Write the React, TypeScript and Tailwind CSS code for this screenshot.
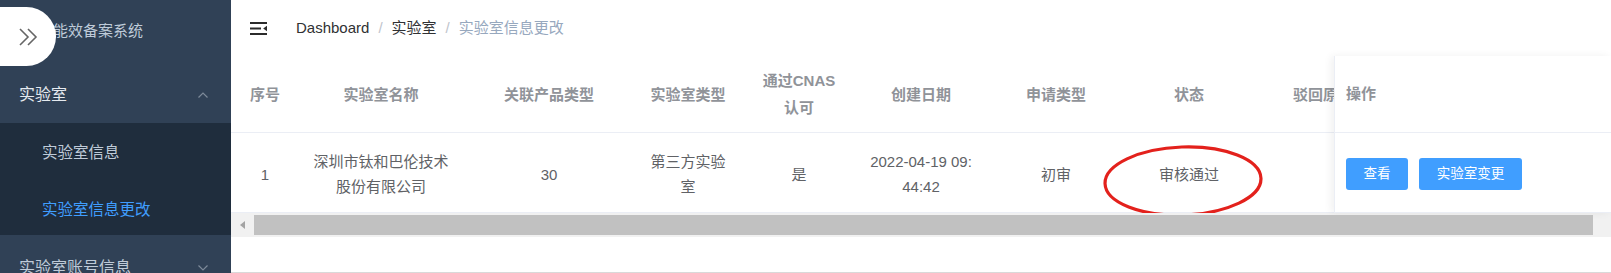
import React from "react"

const headCols = [
  { title: "序号", w: "w-[68px]" },
  { title: "实验室名称", w: "w-[164px]" },
  { title: "关联产品类型", w: "w-[172px]" },
  { title: "实验室类型", w: "w-[106px]" },
  { title: ["通过CNAS", "认可"], w: "w-[116px]" },
  { title: "创建日期", w: "w-[128px]" },
  { title: "申请类型", w: "w-[142px]" },
  { title: "状态", w: "w-[124px]" },
  { title: "驳回原因", w: "w-[144px]" },
  { title: "备注", w: "w-[120px]" },
]

const row: (string | string[])[] = [
  "1",
  ["深圳市钛和巴伦技术", "股份有限公司"],
  "30",
  ["第三方实验", "室"],
  "是",
  ["2022-04-19 09:", "44:42"],
  "初审",
  "审核通过",
  "",
  "",
]

function Lines({ v }: { v: string | string[] }) {
  if (Array.isArray(v)) {
    return (
      <>
        {v.map((l, i) => (
          <div key={i}>{l}</div>
        ))}
      </>
    )
  }
  return <div>{v}</div>
}

function Chevron({ up }: { up?: boolean }) {
  return (
    <svg width="12" height="8" viewBox="0 0 12 8" fill="none" stroke="#7d8a99" strokeWidth="1.2">
      {up ? <polyline points="1.5,6.5 6,2 10.5,6.5" /> : <polyline points="1.5,1.5 6,6 10.5,1.5" />}
    </svg>
  )
}

function Sidebar() {
  return (
    <div className="relative w-[231px] shrink-0 bg-[#304156] overflow-hidden text-[#bfcbd9]">
      {/* collapse pill */}
      <div className="absolute left-0 top-[7px] h-[59px] w-[56px] rounded-r-[30px] bg-white flex items-center justify-center z-10">
        <svg width="20" height="18" viewBox="0 0 20 18" fill="none" stroke="#666" strokeWidth="1.6">
          <polyline points="2,1 10,9 2,17" />
          <polyline points="10,1 18,9 10,17" />
        </svg>
      </div>
      <div className="h-[62px] flex items-center pl-[53px] text-[15px]">能效备案系统</div>
      <div className="h-[61px] flex items-center justify-between pl-[19px] pr-[22px] text-[16px] pt-[4px]">
        <span className="text-[#e5eaf0]">实验室</span>
        <Chevron up />
      </div>
      <div className="bg-[#1f2d3d]">
        <div className="h-[57px] flex items-center pl-[42px] text-[15.5px] pt-[3px]">实验室信息</div>
        <div className="h-[55px] flex items-center pl-[42px] text-[15.5px] text-[#409eff] pt-[4px]">实验室信息更改</div>
      </div>
      <div className="h-[61px] flex items-center justify-between pl-[19px] pr-[22px] text-[16px] pt-[4px]">
        <span>实验室账号信息</span>
        <Chevron />
      </div>
    </div>
  )
}

function Navbar() {
  return (
    <div className="h-[56px] flex items-center pl-[19px] text-[15px]">
      <svg width="18" height="13" viewBox="0 0 18 13" fill="#2b2b2b">
        <rect x="0" y="0" width="17" height="2" />
        <rect x="0" y="5.5" width="11" height="2" />
        <polygon points="17,3.8 17,9.2 13.2,6.5" />
        <rect x="0" y="11" width="17" height="2" />
      </svg>
      <div className="ml-[28px] flex items-center">
        <span className="text-[#303133]">Dashboard</span>
        <span className="mx-[9px] text-[#c0c4cc]">/</span>
        <span className="text-[#303133]">实验室</span>
        <span className="mx-[9px] text-[#c0c4cc]">/</span>
        <span className="text-[#97a8be]">实验室信息更改</span>
      </div>
    </div>
  )
}

function Table() {
  return (
    <div className="min-w-0">
      <div className="flex min-w-0">
        {/* scrolled part */}
        <div className="flex-1 min-w-0 overflow-hidden">
          <div className="flex w-max h-[77px] border-b border-[#ebeef5] text-[#909399] font-bold leading-[27px]">
            {headCols.map((c, i) => (
              <div key={i} className={`${c.w} shrink-0 flex flex-col items-center justify-center text-center`}>
                <Lines v={c.title} />
              </div>
            ))}
          </div>
          <div className="flex w-max h-[80px] border-b border-[#ebeef5] text-[#606266] leading-[25px]">
            {headCols.map((c, i) => (
              <div key={i} className={`${c.w} shrink-0 relative flex flex-col items-center justify-center text-center pt-[3px]`}>
                <Lines v={row[i]} />
                {i === 7 && (
                  <svg
                    className="absolute left-[-25px] top-[11px]"
                    width="164"
                    height="74"
                    viewBox="0 0 164 74"
                    fill="none"
                  >
                    <ellipse cx="81" cy="37" rx="78" ry="34" stroke="#e3211c" strokeWidth="3.2" transform="rotate(-2 81 37)" />
                  </svg>
                )}
              </div>
            ))}
          </div>
        </div>
        {/* fixed right column */}
        <div className="w-[277px] shrink-0 bg-white border-l border-[#ebeef5] shadow-[-3px_0_8px_rgba(0,0,0,0.06)]">
          <div className="h-[77px] border-b border-[#ebeef5] flex items-center pl-[11px] text-[#909399] font-bold">
            操作
          </div>
          <div className="h-[80px] border-b border-[#ebeef5] flex items-center pl-[11px] gap-[11px] pt-[3px]">
            <button className="h-[32px] w-[62px] rounded-[3px] bg-[#409eff] text-white text-[13.5px]">查看</button>
            <button className="h-[32px] w-[103px] rounded-[3px] bg-[#409eff] text-white text-[13.5px]">实验室变更</button>
          </div>
        </div>
      </div>
      {/* horizontal scrollbar */}
      <div className="h-[24px] flex bg-[#f1f1f1]">
        <div className="w-[23px] flex items-center justify-center">
          <svg width="6" height="8" viewBox="0 0 6 8">
            <polygon points="5,0 5,8 0,4" fill="#a3a3a3" />
          </svg>
        </div>
        <div className="w-[1339px] my-[2px] bg-[#c1c1c1]" />
      </div>
    </div>
  )
}

export default function App() {
  return (
    <div className="flex w-[1611px] h-[273px] overflow-hidden bg-white font-['Liberation_Sans','Noto_Sans_CJK_SC',sans-serif] text-[15px]">
      <Sidebar />
      <div className="flex-1 min-w-0 flex flex-col border-b border-[#d9d9d9]">
        <Navbar />
        <Table />
      </div>
    </div>
  )
}
